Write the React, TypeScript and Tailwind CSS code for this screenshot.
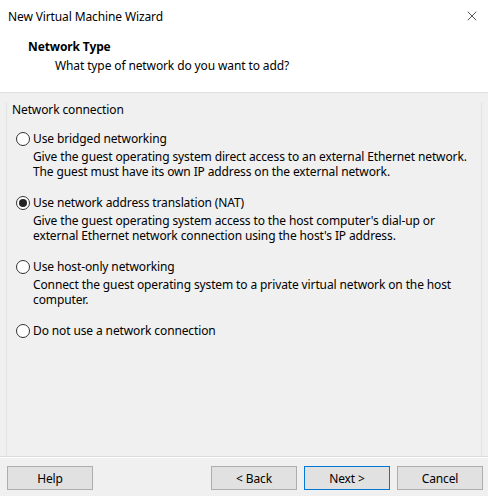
import { X } from "lucide-react";

const options = [
  {
    label: "Use bridged networking",
    lines: [
      "Give the guest operating system direct access to an external Ethernet network.",
      "The guest must have its own IP address on the external network.",
    ],
  },
  {
    label: "Use network address translation (NAT)",
    checked: true,
    lines: [
      "Give the guest operating system access to the host computer's dial-up or",
      "external Ethernet network connection using the host's IP address.",
    ],
  },
  {
    label: "Use host-only networking",
    lines: [
      "Connect the guest operating system to a private virtual network on the host",
      "computer.",
    ],
  },
  { label: "Do not use a network connection", lines: [] },
];

function Radio({ checked }: { checked?: boolean }) {
  return (
    <span className="flex h-[14px] w-[14px] shrink-0 items-center justify-center rounded-full border border-[#333] bg-white">
      {checked && <span className="h-[8px] w-[8px] rounded-full bg-[#222]" />}
    </span>
  );
}

function Btn({ children, primary }: { children: string; primary?: boolean }) {
  return (
    <button
      className={
        "h-[24px] w-[86px] border text-[12px] text-black " +
        (primary ? "border-[#0078d7] bg-[#e1e1e1]" : "border-[#adadad] bg-[#e1e1e1]")
      }
    >
      {children}
    </button>
  );
}

export default function App() {
  return (
    <div className="flex h-[496px] w-[488px] flex-col bg-[#f0f0f0] font-['Noto_Sans',sans-serif] text-[12px] leading-[15px] tracking-[-0.12px] text-black">
      <div className="flex h-[32px] items-center justify-between bg-white pl-[8px] pr-[8px]">
        <span>New Virtual Machine Wizard</span>
        <X size={16} strokeWidth={1} />
      </div>
      <div className="h-[61px] border-b border-[#dfdfdf] bg-white pl-[28px] pt-[7px]">
        <p className="font-bold">Network Type</p>
        <p className="mt-[4px] pl-[27px]">What type of network do you want to add?</p>
      </div>
      <div className="mx-[6px] mt-[9px] flex-1 border-x border-[#e4e4e4] pl-[5px]">
        <p>Network connection</p>
        <div className="mt-[14px] flex flex-col gap-[16px] pl-[4px]">
          {options.map((o) => (
            <div key={o.label}>
              <div className="flex items-center gap-[3px]">
                <Radio checked={o.checked} />
                <span>{o.label}</span>
              </div>
              {o.lines.length > 0 && (
                <div className="mt-[3px] pl-[17px]">
                  {o.lines.map((l) => (
                    <p key={l}>{l}</p>
                  ))}
                </div>
              )}
            </div>
          ))}
        </div>
      </div>
      <div className="border-t border-[#dcdcdc] border-b border-b-white" />
      <div className="flex h-[38px] items-center pl-[7px] pr-[5px] pb-[5px] pt-[7px]">
        <Btn>Help</Btn>
        <div className="ml-auto flex gap-[7px]">
          <Btn>&lt; Back</Btn>
          <Btn primary>Next &gt;</Btn>
          <Btn>Cancel</Btn>
        </div>
      </div>
    </div>
  );
}
